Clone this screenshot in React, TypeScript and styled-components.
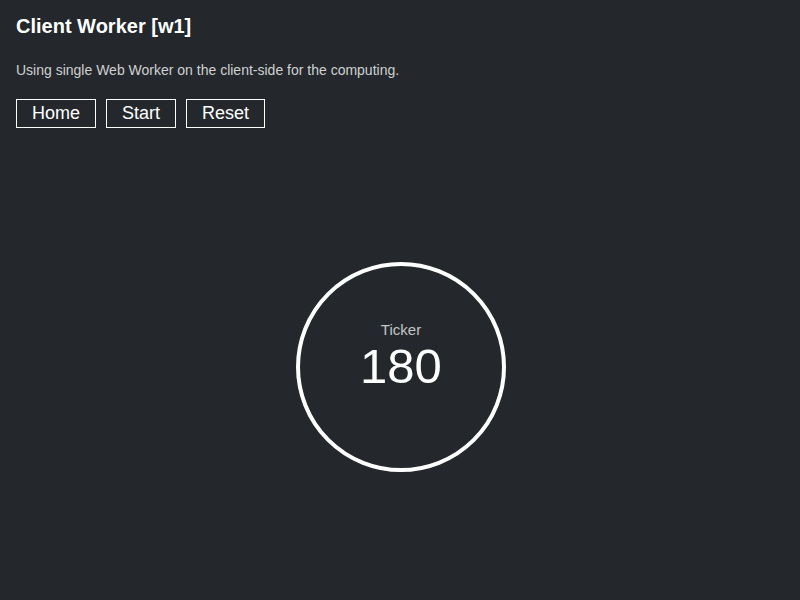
import React from "react";
import styled, { createGlobalStyle } from "styled-components";

const Global = createGlobalStyle`
  html, body { margin: 0; padding: 0; background: #24282c; height: 100%; }
  body { font-family: "Liberation Sans", Arial, Helvetica, sans-serif; color: #fff; }
  #root { min-height: 100%; }
`;

const Page = styled.div`
  box-sizing: border-box;
  min-height: 600px;
  padding: 16px 16px 0 16px;
  display: flex;
  flex-direction: column;
`;

const Title = styled.h1`
  margin: 0;
  font-size: 20px;
  line-height: 20px;
  font-weight: bold;
  color: #fff;
`;

const Subtitle = styled.p`
  margin: 26px 0 0 0;
  font-size: 14px;
  line-height: 16px;
  color: #cfd0d1;
`;

const Toolbar = styled.div`
  display: flex;
  gap: 10px;
  margin-top: 21px;
`;

const Button = styled.button`
  box-sizing: border-box;
  height: 29px;
  padding: 0 15px;
  background: transparent;
  border: 1px solid #fff;
  border-radius: 0;
  color: #fff;
  font-family: "Liberation Sans", Arial, Helvetica, sans-serif;
  font-size: 18px;
  line-height: 27px;
  cursor: pointer;
`;

const Stage = styled.div`
  display: flex;
  justify-content: center;
  margin-top: 134px;
`;

const Dial = styled.div`
  box-sizing: border-box;
  width: 210px;
  height: 210px;
  border: 4px solid #fff;
  border-radius: 50%;
  display: flex;
  flex-direction: column;
  align-items: center;
  justify-content: center;
  margin-left: 2px;
`;

const Label = styled.div`
  font-size: 15px;
  line-height: 17px;
  color: #c4c5c6;
  margin-top: -6px;
`;

const Value = styled.div`
  font-size: 49px;
  line-height: 52px;
  color: #fff;
  margin-top: 2px;
  margin-bottom: 16px;
`;

export default function App() {
  return (
    <>
      <Global />
      <Page>
        <Title>Client Worker [w1]</Title>
        <Subtitle>Using single Web Worker on the client-side for the computing.</Subtitle>
        <Toolbar>
          <Button>Home</Button>
          <Button>Start</Button>
          <Button>Reset</Button>
        </Toolbar>
        <Stage>
          <Dial>
            <Label>Ticker</Label>
            <Value>180</Value>
          </Dial>
        </Stage>
      </Page>
    </>
  );
}
